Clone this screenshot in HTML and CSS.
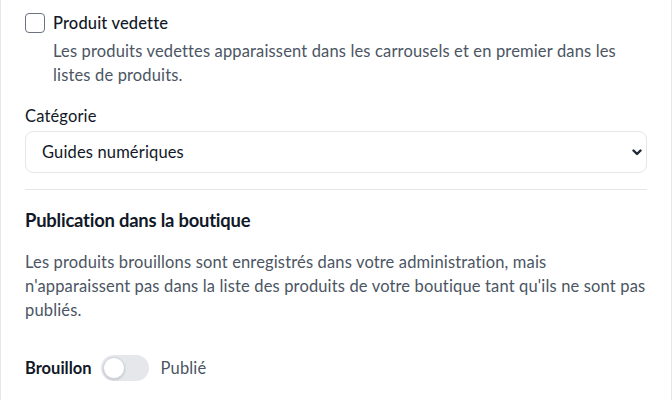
FILE: index.html
```html
<!DOCTYPE html>
<html lang="fr">
<head>
<meta charset="utf-8">
<link rel="stylesheet" href="styles.css">
</head>
<body>
<div class="card">
  <div class="check-row">
    <span class="checkbox"></span>
    <div class="check-text">
      <div class="check-label">Produit vedette</div>
      <p class="help">Les produits vedettes apparaissent dans les carrousels et en premier dans les<br>listes de produits.</p>
    </div>
  </div>

  <div class="field">
    <div class="field-label">Catégorie</div>
    <div class="select">
      <span>Guides numériques</span>
      <svg class="chev" width="10" height="7" viewBox="0 0 10 7"><path d="M1.5 1.5 L5 5 L8.5 1.5" fill="none" stroke="#1f2937" stroke-width="2.4" stroke-linecap="round" stroke-linejoin="round"/></svg>
    </div>
  </div>

  <hr class="divider">

  <h2 class="section-title">Publication dans la boutique</h2>
  <p class="section-help">Les produits brouillons sont enregistrés dans votre administration, mais<br>n'apparaissent pas dans la liste des produits de votre boutique tant qu'ils ne sont pas<br>publiés.</p>

  <div class="toggle-row">
    <span class="toggle-label">Brouillon</span>
    <span class="switch"><span class="knob"></span></span>
    <span class="toggle-alt">Publié</span>
  </div>
</div>
</body>
</html>
```

FILE: styles.css
```css
* { box-sizing: border-box; }
html, body { margin: 0; padding: 0; background: #fff; }
body {
  font-family: "Lato", "Noto Sans", sans-serif;
  font-size: 16.5px;
  letter-spacing: 0.15px;
  color: #1f2937;
}
.card {
  border-left: 1px solid #e5e7eb;
  border-right: 1px solid #e5e7eb;
  padding: 13px 24px 0 24px;
  height: 400px;
}
.check-row {
  display: flex;
  gap: 8px;
}
.checkbox {
  flex: none;
  width: 20px;
  height: 20px;
  border: 1.5px solid #6b7280;
  border-radius: 4px;
  background: #fff;
}
.check-label {
  line-height: 20px;
  font-weight: 500;
  color: #111827;
}
.help {
  margin: 6px 0 0;
  line-height: 24px;
  color: #4b5563;
  white-space: nowrap;
}
.field { margin-top: 17px; }
.field-label {
  line-height: 24px;
  margin-bottom: 3px;
  color: #111827;
}
.select {
  height: 42px;
  border: 1px solid #e5e7eb;
  border-radius: 8px;
  display: flex;
  align-items: center;
  justify-content: space-between;
  padding: 0 4px 0 16px;
  color: #111827;
}
.divider {
  border: 0;
  border-top: 1px solid #e5e7eb;
  margin: 16px 0 0;
}
.section-title {
  margin: 17px 0 0;
  font-size: 18.4px;
  line-height: 26px;
  font-weight: 700;
  letter-spacing: -0.2px;
  color: #111827;
}
.section-help {
  margin: 17px 0 0;
  line-height: 24px;
  color: #4b5563;
  white-space: nowrap;
}
.toggle-row {
  margin-top: 33px;
  display: flex;
  align-items: center;
  gap: 12px;
}
.toggle-label { font-weight: 700; color: #111827; letter-spacing: 0; margin-right: -3px; }
.toggle-alt { color: #4b5563; }
.switch {
  position: relative;
  width: 48px;
  height: 26px;
  border-radius: 13px;
  background: #e5e7eb;
}
.knob {
  position: absolute;
  left: 2px;
  top: 2px;
  width: 22px;
  height: 22px;
  border-radius: 50%;
  background: #fff;
  border: 1px solid #d1d5db;
  box-shadow: 0 1px 2px rgba(0,0,0,0.15);
}
```
